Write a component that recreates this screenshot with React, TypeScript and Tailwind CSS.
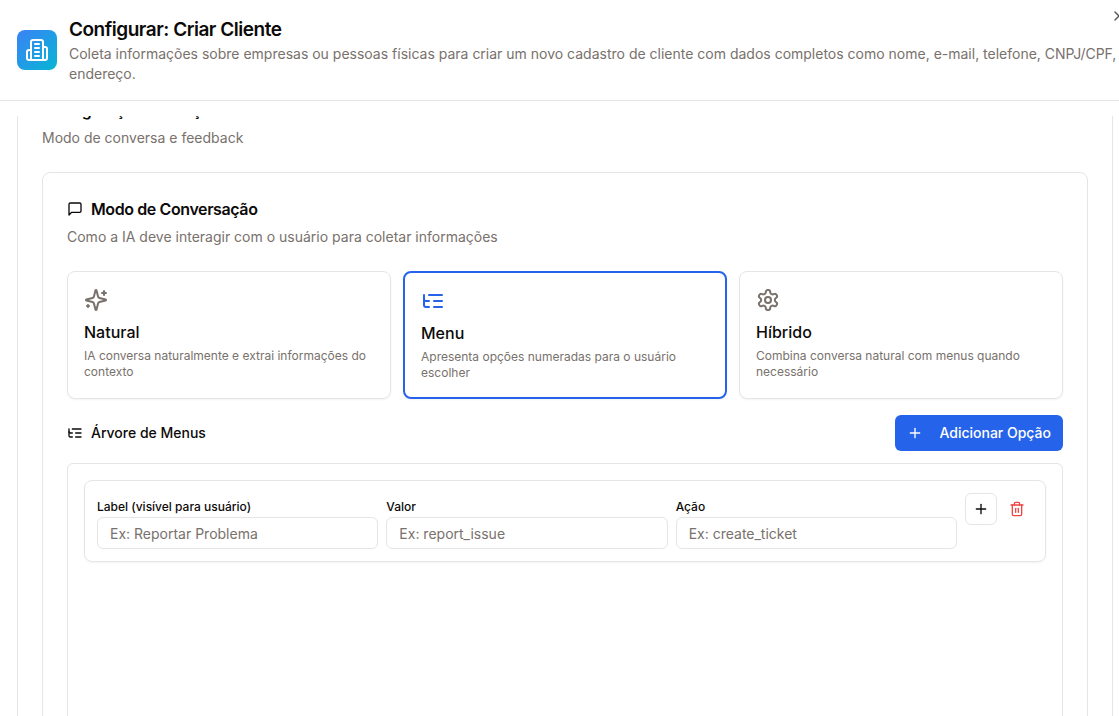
import React from "react";
import { Plus, X } from "lucide-react";

type IconProps = { paths: string[]; className?: string };

function Icon({ paths, className }: IconProps) {
  return (
    <svg
      viewBox="0 0 24 24"
      fill="none"
      stroke="currentColor"
      strokeWidth="2"
      strokeLinecap="round"
      strokeLinejoin="round"
      aria-hidden="true"
      className={className}
    >
      {paths.map((d) => (
        <path key={d} d={d} />
      ))}
    </svg>
  );
}

const building = [
  "M6 22V4a2 2 0 0 1 2-2h8a2 2 0 0 1 2 2v18Z",
  "M6 12H4a2 2 0 0 0-2 2v6a2 2 0 0 0 2 2h2",
  "M18 9h2a2 2 0 0 1 2 2v9a2 2 0 0 1-2 2h-2",
  "M10 6h4",
  "M10 10h4",
  "M10 14h4",
  "M10 18h4",
];
const message = ["M21 15a2 2 0 0 1-2 2H7l-4 4V5a2 2 0 0 1 2-2h14a2 2 0 0 1 2 2z"];
const sparkles = [
  "M9.937 15.5A2 2 0 0 0 8.5 14.063l-6.135-1.582a.5.5 0 0 1 0-.962L8.5 9.936A2 2 0 0 0 9.937 8.5l1.582-6.135a.5.5 0 0 1 .963 0L14.063 8.5A2 2 0 0 0 15.5 9.937l6.135 1.581a.5.5 0 0 1 0 .964L15.5 14.063a2 2 0 0 0-1.437 1.437l-1.582 6.135a.5.5 0 0 1-.963 0z",
  "M20 3v4",
  "M22 5h-4",
  "M4 17v2",
  "M5 18H3",
];
const listTree = ["M21 12h-8", "M21 6H8", "M21 18h-8", "M3 6v4c0 1.1.9 2 2 2h3", "M3 10v6c0 1.1.9 2 2 2h3"];
const settings = [
  "M12.22 2h-.44a2 2 0 0 0-2 2v.18a2 2 0 0 1-1 1.73l-.43.25a2 2 0 0 1-2 0l-.15-.08a2 2 0 0 0-2.73.73l-.22.38a2 2 0 0 0 .73 2.73l.15.1a2 2 0 0 1 1 1.72v.51a2 2 0 0 1-1 1.74l-.15.09a2 2 0 0 0-.73 2.73l.22.38a2 2 0 0 0 2.73.73l.15-.08a2 2 0 0 1 2 0l.43.25a2 2 0 0 1 1 1.73V20a2 2 0 0 0 2 2h.44a2 2 0 0 0 2-2v-.18a2 2 0 0 1 1-1.73l.43-.25a2 2 0 0 1 2 0l.15.08a2 2 0 0 0 2.73-.73l.22-.39a2 2 0 0 0-.73-2.73l-.15-.08a2 2 0 0 1-1-1.74v-.5a2 2 0 0 1 1-1.74l.15-.09a2 2 0 0 0 .73-2.73l-.22-.38a2 2 0 0 0-2.73-.73l-.15.08a2 2 0 0 1-2 0l-.43-.25a2 2 0 0 1-1-1.73V4a2 2 0 0 0-2-2z",
  "M15 12a3 3 0 1 1-6 0a3 3 0 1 1 6 0",
];
const trash = [
  "M3 6h18",
  "M19 6v14c0 1-1 2-2 2H7c-1 0-2-1-2-2V6",
  "M8 6V4c0-1 1-2 2-2h4c1 0 2 1 2 2v2",
  "M10 11v6",
  "M14 11v6",
];

const modes = [
  { name: "Natural", text: "IA conversa naturalmente e extrai informações do contexto", icon: sparkles },
  { name: "Menu", text: "Apresenta opções numeradas para o usuário escolher", icon: listTree },
  { name: "Híbrido", text: "Combina conversa natural com menus quando necessário", icon: settings },
];

const fields = [
  { id: "label", label: "Label (visível para usuário)", placeholder: "Ex: Reportar Problema" },
  { id: "value", label: "Valor", placeholder: "Ex: report_issue" },
  { id: "action", label: "Ação", placeholder: "Ex: create_ticket" },
];

export default function App() {
  const [mode, setMode] = React.useState("Menu");

  return (
    <div className="relative flex h-screen flex-col overflow-hidden bg-white font-['Inter',sans-serif] text-[#0c0a09]">
      <header className="flex shrink-0 items-center gap-3 border-b border-[#e5e5e5] py-4 pl-[17px]">
        <div className="flex size-10 shrink-0 items-center justify-center rounded-lg bg-linear-to-br/srgb from-[#3b82f6] to-[#06b6d4] text-white">
          <Icon paths={building} className="size-6" />
        </div>
        <div>
          <h1 className="text-[19px] leading-7 font-semibold tracking-tight">Configurar: Criar Cliente</h1>
          <p className="text-sm text-[#78716c]">
            Coleta informações sobre empresas ou pessoas físicas para criar um novo cadastro de cliente com dados
            completos como nome, e-mail, telefone, CNPJ/CPF, endereço.
          </p>
        </div>
      </header>
      <button type="button" aria-label="Fechar" className="absolute top-2 -right-2 opacity-70">
        <X className="size-4" />
      </button>

      <main className="mt-[15px] min-h-0 flex-1 overflow-hidden pr-[6px] pl-[17px]">
        <section className="-mt-[43px] border border-[#e5e5e5] p-6">
          <h2 className="text-base leading-6 font-semibold tracking-tight">Configurações Avançadas</h2>
          <p className="mt-1.5 text-sm text-[#78716c]">Modo de conversa e feedback</p>

          <div className="mt-6 rounded-lg border border-[#e5e5e5] p-6">
            <div className="flex items-center gap-2">
              <Icon paths={message} className="size-4" />
              <h3 className="text-base leading-6 font-semibold tracking-tight">Modo de Conversação</h3>
            </div>
            <p className="mt-1.5 text-sm text-[#78716c]">
              Como a IA deve interagir com o usuário para coletar informações
            </p>

            <div className="mt-6 grid grid-cols-3 gap-3">
              {modes.map((m) => {
                const selected = m.name === mode;
                return (
                  <button
                    key={m.name}
                    type="button"
                    aria-pressed={selected}
                    onClick={() => setMode(m.name)}
                    className={
                      selected
                        ? "flex min-h-32 flex-col items-start rounded-lg border-2 border-[#2563eb] p-4 text-left shadow-xs"
                        : "flex min-h-32 flex-col items-start rounded-lg border border-[#e5e5e5] p-4 text-left shadow-xs"
                    }
                  >
                    <Icon
                      paths={m.icon}
                      className={selected ? "size-6 shrink-0 text-[#2563eb]" : "size-6 shrink-0 text-[#78716c]"}
                    />
                    <span className="mt-2 text-base leading-6 font-medium">{m.name}</span>
                    <span className="mt-1 text-xs text-[#78716c]">{m.text}</span>
                  </button>
                );
              })}
            </div>

            <div className="mt-4 flex items-center justify-between">
              <h4 className="flex items-center gap-2 text-sm font-medium">
                <Icon paths={listTree} className="size-4" />
                Árvore de Menus
              </h4>
              <button
                type="button"
                className="flex h-9 items-center gap-4 rounded-md bg-[#2563eb] px-3 text-sm font-medium text-white"
              >
                <Plus className="size-4" />
                Adicionar Opção
              </button>
            </div>

            <div className="mt-3 h-96 rounded-md border border-[#e5e5e5] p-4">
              <div className="flex gap-2 rounded-lg border border-[#e5e5e5] p-3 shadow-xs">
                <div className="grid flex-1 grid-cols-3 gap-2">
                  {fields.map((f) => (
                    <div key={f.id} className="min-w-0 pt-1">
                      <label htmlFor={f.id} className="block text-xs leading-5 font-medium">
                        {f.label}
                      </label>
                      <input
                        id={f.id}
                        type="text"
                        placeholder={f.placeholder}
                        className="block h-8 w-full rounded-md border border-[#e5e5e5] px-3 text-sm placeholder:text-[#78716c]"
                      />
                    </div>
                  ))}
                </div>
                <div className="flex items-start gap-1">
                  <button
                    type="button"
                    aria-label="Adicionar subopção"
                    className="flex size-8 items-center justify-center rounded-md border border-[#e5e5e5]"
                  >
                    <Plus className="size-4" />
                  </button>
                  <button
                    type="button"
                    aria-label="Remover opção"
                    className="flex size-8 items-center justify-center rounded-md text-[#ef4444]"
                  >
                    <Icon paths={trash} className="size-4" />
                  </button>
                </div>
              </div>
            </div>
          </div>
        </section>
      </main>
    </div>
  );
}
